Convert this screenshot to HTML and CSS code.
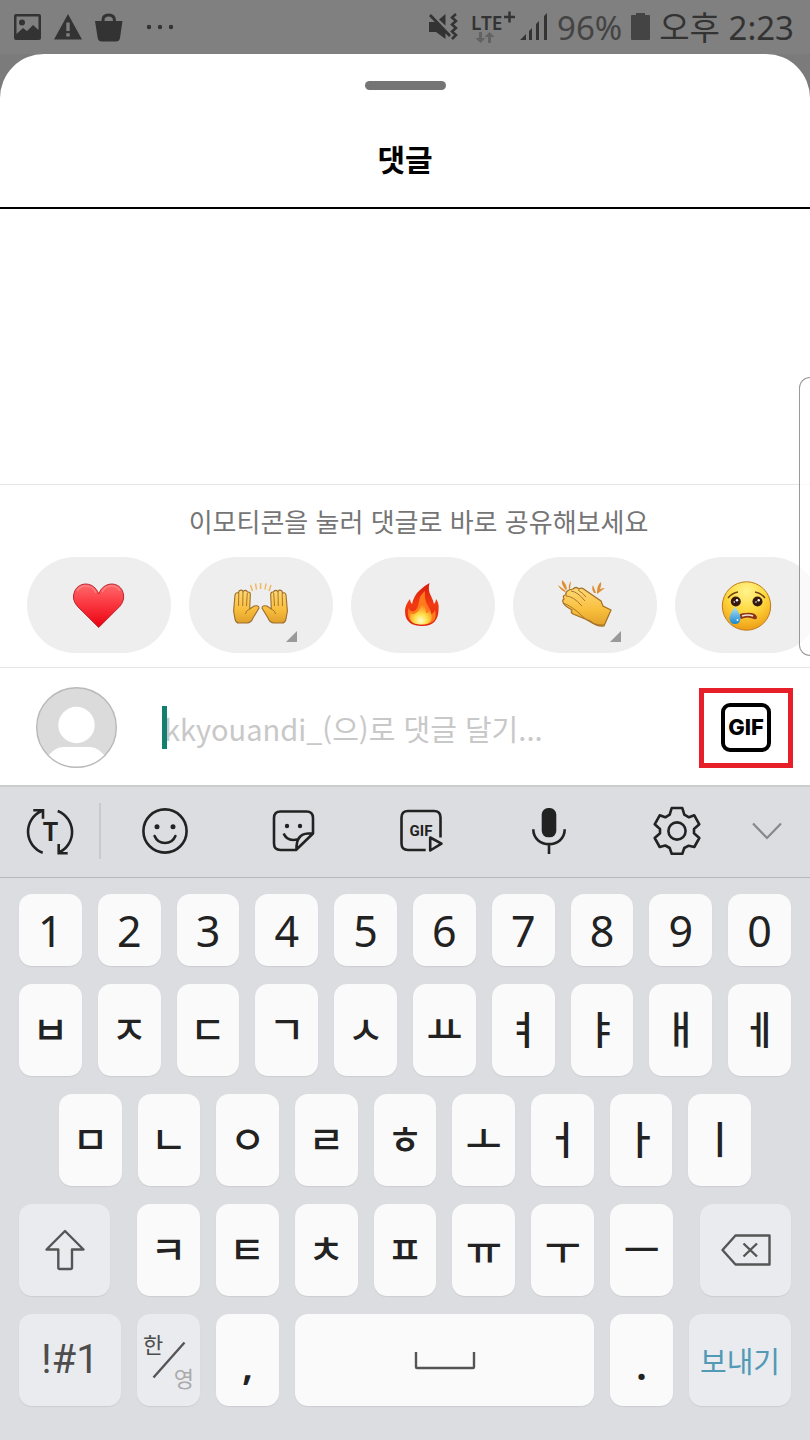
FILE: index.html
```html
<!DOCTYPE html>
<html lang="ko">
<head>
<meta charset="utf-8">
<meta name="viewport" content="width=device-width, initial-scale=1">
<title>댓글</title>
<link rel="stylesheet" href="styles.css">
</head>
<body>
<div class="status">
  <div class="status-left">
    <svg width="27" height="27" viewBox="0 0 27 27"><path fill="#333" fill-rule="evenodd" d="M2 0H25a2 2 0 0 1 2 2V24a2 2 0 0 1-2 2H2a2 2 0 0 1-2-2V2a2 2 0 0 1 2-2ZM2.500 2.500V20L9 14l4 3 6-6 5.500 5V2.500Z"/><circle cx="8" cy="8.500" r="3" fill="#333"/></svg>
    <svg width="28" height="27" viewBox="0 0 28 27"><path fill="#333" fill-rule="evenodd" d="M14 0 28 25.500H0ZM12.300 8.500V17h3.400V8.500ZM12.300 19.300v3.200h3.400v-3.200Z"/></svg>
    <svg width="28" height="29" viewBox="0 0 28 29"><path fill="#333" d="M0 8H27.500L25 25q-.7 3.500-4 3.500H7Q3.400 28.500 2.700 25Z"/><path d="M8 9V7q0-5 5.700-5t5.700 5v2" fill="none" stroke="#333" stroke-width="3"/></svg>
    <svg class="dots" width="28" height="6" viewBox="0 0 28 6" fill="#333"><circle cx="3" cy="3" r="2.200"/><circle cx="14" cy="3" r="2.200"/><circle cx="25" cy="3" r="2.200"/></svg>
  </div>
  <div class="status-right">
    <svg width="30" height="29" viewBox="0 0 30 29"><path fill="#333" d="M1 9H7L23 22 17.500 18V26L8 19H1ZM11 6.500 17.500 1V12.500Z"/><path d="M2 2 22 23" stroke="#333" stroke-width="2.800"/><path d="m28 1-4 3.500 4 3.500-4 3.500 4 3.500-4 3.500 4 3.500-4 4" fill="none" stroke="#333" stroke-width="2.500"/></svg>
    <svg class="lte" width="46" height="36" viewBox="0 -2 46 36"><text x="1" y="19" class="lte-text">LTE</text><path d="M34 6H45M39.500 .5V11.500" stroke="#333" stroke-width="2.500"/><path fill="#626262" d="M9 21h3v6h3.500L10.500 32 5.500 27H9ZM18 32h3V26h3.500L19.500 21 14.500 26H18Z"/></svg>
    <svg width="28" height="28" viewBox="0 0 28 28" fill="#333"><path d="M0 27 6 21V27ZM9 27V18l3-3V27ZM16 27V11l3-3V27ZM24 27V3l3-3V27Z"/></svg>
    <span class="pct">96%</span>
    <svg width="19" height="28" viewBox="0 0 19 28"><path fill="#444" d="M5 0H14V2H18q1 0 1 1V26q0 1-1 1H1q-1 0-1-1V3q0-1 1-1H5Z"/></svg>
    <span class="time">오후 2:23</span>
  </div>
</div>

<main class="sheet-wrap">
<div class="sheet">
  <header class="head">
    <div class="handle"></div>
    <h1>댓글</h1>
  </header>
  <section class="comments"></section>
  <section class="quick">
    <p>이모티콘을 눌러 댓글로 바로 공유해보세요</p>
    <div class="pills">
      <button class="pill" aria-label="하트"><svg width="60" height="60" viewBox="0 0 60 60"><defs><linearGradient id="ht" x1="0" y1="0" x2="0" y2="1"><stop offset="0" stop-color="#ff6b6c"/><stop offset=".4" stop-color="#fb3d45"/><stop offset="1" stop-color="#ea0010"/></linearGradient></defs><path d="M29.700 52.500 8.500 31.500Q2 24 5.800 16C10 6.500 25 6 29.700 19 34.500 6 49.500 6.500 53.500 16Q57 24 50.700 31.500Z" fill="url(#ht)" stroke="#b52a31" stroke-width="1"/><path d="M8 16C12 9 23 9 27 18M33 17C38 8 48 10 51 16" fill="none" stroke="#ff8484" stroke-width="1.200"/></svg></button>
      <button class="pill" aria-label="만세"><svg width="60" height="60" viewBox="0 0 60 60"><defs><linearGradient id="hd" x1="0" y1="0" x2="0" y2="1"><stop offset="0" stop-color="#ffd977"/><stop offset=".6" stop-color="#f8bd3b"/><stop offset="1" stop-color="#dfa02b"/></linearGradient><g id="hand"><path d="M4 44 2.600 36 4 20q.8-3 3.500-2l.5-2q3-2 4 .5 3-2.500 4.500.5 3-.5 2.800 3L18.700 34 23 31q5-1 5 2L22 43q-2 5-6 5H8q-3 0-4-4Z" fill="url(#hd)" stroke="#9d6d2b" stroke-width="1.100"/><path d="M7.800 18 7.500 31M12 17 11.700 31M16.300 18 15.500 31M18.500 34q-4 2-4 5" fill="none" stroke="#a87629" stroke-width="1"/></g></defs><use href="#hand"/><use href="#hand" transform="matrix(-1 0 0 1 59 0)"/><path d="M19.500 10l2 6M24.500 8.500l1 6M29.600 8v6M35 8.500l-1 6M40 10l-2 6" stroke="#efb85f" stroke-width="1.500"/></svg><i class="more"></i></button>
      <button class="pill" aria-label="불"><svg width="60" height="60" viewBox="0 0 60 60"><defs><linearGradient id="fr" x1="0" y1="0" x2="0" y2="1"><stop offset="0" stop-color="#d91b0d"/><stop offset=".5" stop-color="#f23a12"/><stop offset="1" stop-color="#dd2412"/></linearGradient><radialGradient id="fi" cx=".5" cy=".82" r=".7"><stop offset="0" stop-color="#fffbd0"/><stop offset=".4" stop-color="#ffe14a"/><stop offset="1" stop-color="#ff7b18"/></radialGradient></defs><path d="M36.500 8Q34.500 15 38 21q2 4 3 8 2-2 2-5 3 4 2.600 9Q46 51 29 51T12 36q0-6 5-12 0 3 2 5Q21 20 27 15 31 11 36.500 8Z" fill="url(#fr)"/><path d="M32 16Q31 25 35 31q3 4 3 8 3-1 4-4 4 14-13 14.500Q13 49 15 35l1-2q1 4 5 3 4-2 5-10 1-6 6-10Z" fill="#ff7a1c"/><path d="M28 27q5 5 5 11 3 0 4-3 6 14-8 14.500T17 38q3 2 6 0 5-3 5-11Z" fill="url(#fi)"/></svg></button>
      <button class="pill" aria-label="박수"><svg width="60" height="60" viewBox="0 0 60 60"><path d="M18 14q3-3 6 0 3-2 6 1l16 11 2 5 8 4-7 16q-7 1-14-5L18 39q-3-2-1-4-9-5-9-8-1-2 1-3-2-4 2-4-1-5 7-6Z" fill="url(#hd)" stroke="#a36f24" stroke-width="1.200"/><path d="M11 21q7 0 16 10M16 16q7 1 14 10M23 15q5 3 8 7M8 28Q17 31 27 41T49 50" fill="none" stroke="#a8762b" stroke-width="1"/><path fill="#df8e31" d="M3 10l8 6-1 1Q5 15 3 10ZM7 5q4 3 5 9l-1 1Q6 10 7 5ZM16 6l-1 8-1 0q-1-4 2-8ZM38 10l3 8-2 0q-3-4-1-8ZM46 7q1 4-3 11l-1-1q0-7 4-10ZM50 13l-8 6 0-2q3-4 8-4Z"/></svg><i class="more"></i></button>
      <button class="pill" aria-label="슬픔"><svg width="60" height="60" viewBox="0 0 60 60"><defs><radialGradient id="cf" cx=".5" cy=".2" r=".8"><stop offset="0" stop-color="#fff48e"/><stop offset=".5" stop-color="#ffd93e"/><stop offset="1" stop-color="#ee9d16"/></radialGradient><linearGradient id="td" x1="0" y1="0" x2="0" y2="1"><stop offset="0" stop-color="#b1e3f4"/><stop offset="1" stop-color="#1787d1"/></linearGradient></defs><circle cx="29.500" cy="31" r="24.200" fill="url(#cf)" stroke="#bf7b1c" stroke-width="1"/><path d="M11 23q4-5 10-6M38 17q6 1 10 6" fill="none" stroke="#70431a" stroke-width="1.500"/><g fill="#35190f"><circle cx="18.800" cy="26.500" r="5"/><circle cx="40.500" cy="26.500" r="5"/></g><g fill="#fff"><circle cx="17.300" cy="27" r=".8"/><circle cx="20" cy="25.300" r="1.200"/><circle cx="39" cy="27" r=".8"/><circle cx="41.700" cy="25.300" r="1.200"/></g><path d="M22 42q-1-4 7-4 9-1 11 4 0 3-3 2-7-3-13 0Z" fill="#8c3418"/><path d="M25 41q6-2 11 0" stroke="#f4e2cf" stroke-width="1.500" fill="none"/><path d="M18 32q-6 8-5.500 11.500Q13 49 18 49t5.500-5.500Q24 40 18 32Z" fill="url(#td)"/><circle cx="20.500" cy="45" r="1" fill="#fff"/></svg></button>
    </div>
  </section>
  <form class="composer">
    <svg class="avatar" width="81" height="81" viewBox="0 0 81 81"><defs><clipPath id="av"><circle cx="40.500" cy="40.500" r="40"/></clipPath></defs><circle cx="40.500" cy="40.500" r="40" fill="#dbdbdb"/><g clip-path="url(#av)" fill="#fff"><circle cx="40.500" cy="38" r="18.200"/><path d="M10 81V72Q18 60 27 60H54Q63 60 71 72V81Z"/></g><circle cx="40.500" cy="40.500" r="39.800" fill="none" stroke="#b9b9b9" stroke-width="1.400"/></svg>
    <div class="field"><i class="caret"></i><input type="text" aria-label="댓글" placeholder="kkyouandi_(으)로 댓글 달기..."></div>
    <button type="button" class="gif"><span>GIF</span></button>
  </form>
</div>
</main>

<section class="keyboard">
  <div class="tools">
    <button class="tool first" aria-label="텍스트 변환"><svg width="52" height="52" viewBox="0 0 52 52"><path d="M18.700 47.700A22.500 22.500 0 0 1 17.500 6M33.700 6A22.500 22.500 0 0 1 34.800 47.500M9.300 5.200H19V13.700M34.700 39V48.300H43.700"/><text x="26.500" y="36" class="t-text">T</text></svg></button>
    <button class="tool" aria-label="이모지"><svg width="52" height="52" viewBox="0 0 52 52"><circle cx="26" cy="26" r="21.600"/><g class="solid"><circle cx="18" cy="21.700" r="2.500"/><circle cx="34" cy="21.700" r="2.500"/></g><path d="M15.600 31Q18.500 38 26 38T36.400 31" stroke-linecap="round"/></svg></button>
    <button class="tool" aria-label="스티커"><svg width="52" height="52" viewBox="0 0 52 52"><path d="M46 28.500V13Q46 6.500 39.500 6.500H13.500Q7 6.500 7 13V38.500Q7 45 13.500 45H29L46 28.500H41Q29 29 29.500 44.500M16.700 28.500Q20 37 31 34.300" stroke-linejoin="round"/><g class="solid"><circle cx="20" cy="21" r="2.200"/><circle cx="33" cy="21" r="2.200"/></g></svg></button>
    <button class="tool" aria-label="GIF 검색"><svg width="52" height="52" viewBox="0 0 52 52"><path d="M30.700 45H13Q6.500 45 6.500 38.500V12.500Q6.500 6 13 6H39Q45.500 6 45.500 12.500V32.500M35.200 32.500V45.500L46.500 38.700Z" stroke-linejoin="round"/><text x="26" y="30.500" class="g-text">GIF</text></svg></button>
    <button class="tool" aria-label="음성 입력"><svg width="52" height="52" viewBox="0 0 52 52"><rect class="solid" x="18.700" y="3" width="14.600" height="29.300" rx="6.500"/><path d="M10.300 24.300C10.300 44 41.700 44 41.700 24.300M26 39V49"/></svg></button>
    <button class="tool" aria-label="설정"><svg width="52" height="52" viewBox="0 0 52 52"><path stroke-linejoin="round" d="M20.700 3H31.300L33.300 9.700 38 12.300 43.300 10.300 48.300 19.300 43 24V28.200L48.300 33 43.300 42 37.700 40.700 33.300 43 31.300 48.700H20.700L18.700 43 14.300 40.500 8.700 42 3.700 33 9 28.200V24L3.700 19.300 8.700 10.300 14.300 12.300 18.700 9.700Z"/><circle cx="26" cy="26" r="8.600"/></svg></button>
    <button class="tool last" aria-label="닫기"><svg width="30" height="18" viewBox="0 0 30 18"><path d="M1 1.500 15 16 29 1.500"/></svg></button>
  </div>
  <div class="keys">
    <div class="row nums"><button>1</button><button>2</button><button>3</button><button>4</button><button>5</button><button>6</button><button>7</button><button>8</button><button>9</button><button>0</button></div>
    <div class="row"><button>ㅂ</button><button>ㅈ</button><button>ㄷ</button><button>ㄱ</button><button>ㅅ</button><button>ㅛ</button><button>ㅕ</button><button>ㅑ</button><button>ㅐ</button><button>ㅔ</button></div>
    <div class="row inset"><button>ㅁ</button><button>ㄴ</button><button>ㅇ</button><button>ㄹ</button><button>ㅎ</button><button>ㅗ</button><button>ㅓ</button><button>ㅏ</button><button>ㅣ</button></div>
    <div class="row">
      <button class="fn side" aria-label="Shift"><svg width="40" height="42" viewBox="0 0 40 42"><path d="M20 2 38.500 20.500H27V38.500q0 1.500-1.500 1.500H14.800q-1.500 0-1.500-1.500V20.500H1.500Z"/></svg></button>
      <div class="row mid"><button>ㅋ</button><button>ㅌ</button><button>ㅊ</button><button>ㅍ</button><button>ㅠ</button><button>ㅜ</button><button>ㅡ</button></div>
      <button class="fn side" aria-label="지우기"><svg width="50" height="32" viewBox="0 0 50 32"><path d="M1.500 16 14.500 1.500H48.500V30.500H14.500ZM22.500 9.500 36 22.500M36 9.500 22.500 22.500"/></svg></button>
    </div>
    <div class="row bottom">
      <button class="fn sym">!#1</button>
      <button class="fn lang"><span class="ko">한</span><svg width="34" height="38" viewBox="0 0 34 38"><path d="M1.500 36.500 32.500 1.500"/></svg><span class="en">영</span></button>
      <button class="punct">,</button>
      <button class="space" aria-label="스페이스"><svg width="62" height="19" viewBox="0 0 62 19"><path d="M2 1V16q0 1 1 1H59q1 0 1-1V1"/></svg></button>
      <button class="punct">.</button>
      <button class="fn send">보내기</button>
    </div>
  </div>
</section>
<aside class="edge"></aside>
</body>
</html>
```
FILE: styles.css
```css
* { box-sizing: border-box; }
body {
  margin: 0;
  min-height: 100vh;
  display: flex;
  flex-direction: column;
  position: relative;
  overflow-x: hidden;
  background: #dcdde1;
  color: #000;
  font-family: "Noto Sans", "Noto Sans CJK KR", sans-serif;
}
button, input { font: inherit; color: inherit; border: 0; padding: 0; margin: 0; background: none; }
svg { display: block; flex: none; }

.status {
  height: 54px;
  padding: 0 16px 0 14px;
  display: flex;
  align-items: center;
  justify-content: space-between;
  background: #808080;
  color: #333;
  font-size: 33px;
  line-height: 50px;
}
.status-left { display: flex; align-items: center; gap: 13px; }
.dots { margin-left: 10px; }
.status-right { display: flex; align-items: center; gap: 9px; white-space: nowrap; }
.status-right span { padding-top: 2px; }
.lte { margin: 0 -5px 0 3px; overflow: visible; }
.lte-text { font: 600 19px "Noto Sans", sans-serif; fill: #333; }
.pct { color: #444; }

.sheet-wrap { flex: 1; display: flex; background: #7b7b7b; }
.sheet {
  flex: 1;
  min-width: 0;
  display: flex;
  flex-direction: column;
  background: #fff;
  border-radius: 44px 44px 0 0;
}
.head {
  display: flex;
  flex-direction: column;
  align-items: center;
  padding: 27px 0;
  border-bottom: 2px solid #000;
}
.handle { width: 81px; height: 9px; border-radius: 5px; background: #757575; }
h1 {
  margin: 46px 0 0;
  font: 700 30px/44px "Noto Sans CJK KR", sans-serif;
}
.comments { flex: 1; }

.quick { border-top: 1px solid #e6e6e6; padding: 18px 0 14px 27px; overflow: hidden; }
.quick p {
  margin: 0 0 18px;
  text-align: center;
  color: #757575;
  font: 26px/36px "Noto Sans CJK KR", sans-serif;
}
.pills { display: flex; gap: 18px; }
.pill {
  flex: none;
  width: 144px;
  height: 96px;
  border-radius: 48px;
  background: #eee;
  position: relative;
  display: flex;
  align-items: center;
  justify-content: center;
}
.more {
  position: absolute;
  right: 36px;
  bottom: 11px;
  border-left: 11px solid transparent;
  border-bottom: 11px solid #999;
}

.composer {
  border-top: 1px solid #e6e6e6;
  padding: 19px 17px 17px 36px;
  display: flex;
  align-items: center;
}
.field { flex: 1; min-width: 0; margin-left: 45px; position: relative; }
.field input {
  display: block;
  width: 100%;
  height: 44px;
  padding-left: 2px;
  font: 29px/44px "Noto Sans CJK KR", sans-serif;
}
.field input::placeholder { color: #c8c8c8; opacity: 1; }
.caret { position: absolute; left: 0; top: 0; width: 5px; height: 43px; background: #13806f; }
.gif {
  width: 94px;
  height: 80px;
  border: 5px solid #e71f28;
  display: flex;
  align-items: center;
  justify-content: center;
}
.gif span {
  width: 50px;
  height: 49px;
  border: 4px solid #000;
  border-radius: 9px;
  text-align: center;
  font: 800 22px/41px Inter, sans-serif;
}

.keyboard { border-top: 2px solid #cbccce; background: #dcdde1; color: #222; }
.tools {
  height: 91px;
  padding: 0 17px 2px 0;
  display: flex;
  align-items: center;
  border-bottom: 1px solid #b5b7ba;
}
.tool { flex: 128 1 0; display: flex; align-items: center; justify-content: center; }
.tool svg { fill: none; stroke: #222; stroke-width: 2.6; }
.tool .solid, .tool text { fill: #222; stroke: none; }
.tool.first { flex: 99 1 0; height: 56px; border-right: 2px solid #c9cacd; }
.tool.last { flex: 52 1 0; }
.tool.last svg { stroke: #888; stroke-width: 2.2; }
.t-text { font: 700 25px Roboto, sans-serif; text-anchor: middle; }
.g-text { font: 700 15px Roboto, sans-serif; text-anchor: middle; }

.keys { padding: 16px 19px 34px; display: flex; flex-direction: column; gap: 18px; }
.row { display: flex; gap: 16px; }
.row button {
  flex: 1 1 0;
  min-width: 0;
  height: 92px;
  border-radius: 13px;
  background: #fafafa;
  box-shadow: 0 1px 1px #cccdd1;
  display: flex;
  align-items: center;
  justify-content: center;
  font: 500 39px/48px "Noto Sans CJK KR", sans-serif;
}
.row:not(.bottom) button:not(.fn) { padding-bottom: 6px; }
.row.nums button:not(.fn) { height: 72px; padding: 2px 0 0; font: 43px/60px "Noto Sans", sans-serif; }
.row.inset { padding: 0 40px; }
.row.mid { flex: 1; margin: 0 11px; }
.row .fn { background: #e9ebef; color: #4d4d4d; }
.row .side { flex: 0 0 91px; }
.row svg { fill: none; stroke: #555; stroke-width: 2.4; stroke-linejoin: round; }
.row .sym { flex-grow: 102; font: 40px/48px Roboto, sans-serif; }
.row .lang { flex-grow: 63; display: grid; justify-content: stretch; align-content: center; font: 22px/32px "Noto Sans CJK KR", sans-serif; grid-template-rows: 66px; }
.lang > * { grid-area: 1 / 1; place-self: center; }
.lang .ko { place-self: start; margin-left: 6px; }
.lang .en { place-self: end; margin-right: 6px; color: #aaa; }
.bottom .punct { flex-grow: 63; padding-top: 10px; font: 600 40px/48px "Noto Sans", sans-serif; }
.bottom .space { flex-grow: 299; }
.row .send { flex-grow: 102; color: #5299b6; font: 29px/44px "Noto Sans CJK KR", sans-serif; }

.edge {
  position: absolute;
  right: 0;
  top: 377px;
  width: 11px;
  height: 279px;
  border: 1px solid #999;
  border-right: 0;
  border-radius: 11px 0 0 11px;
  background: rgba(255, 255, 255, .7);
}
```
